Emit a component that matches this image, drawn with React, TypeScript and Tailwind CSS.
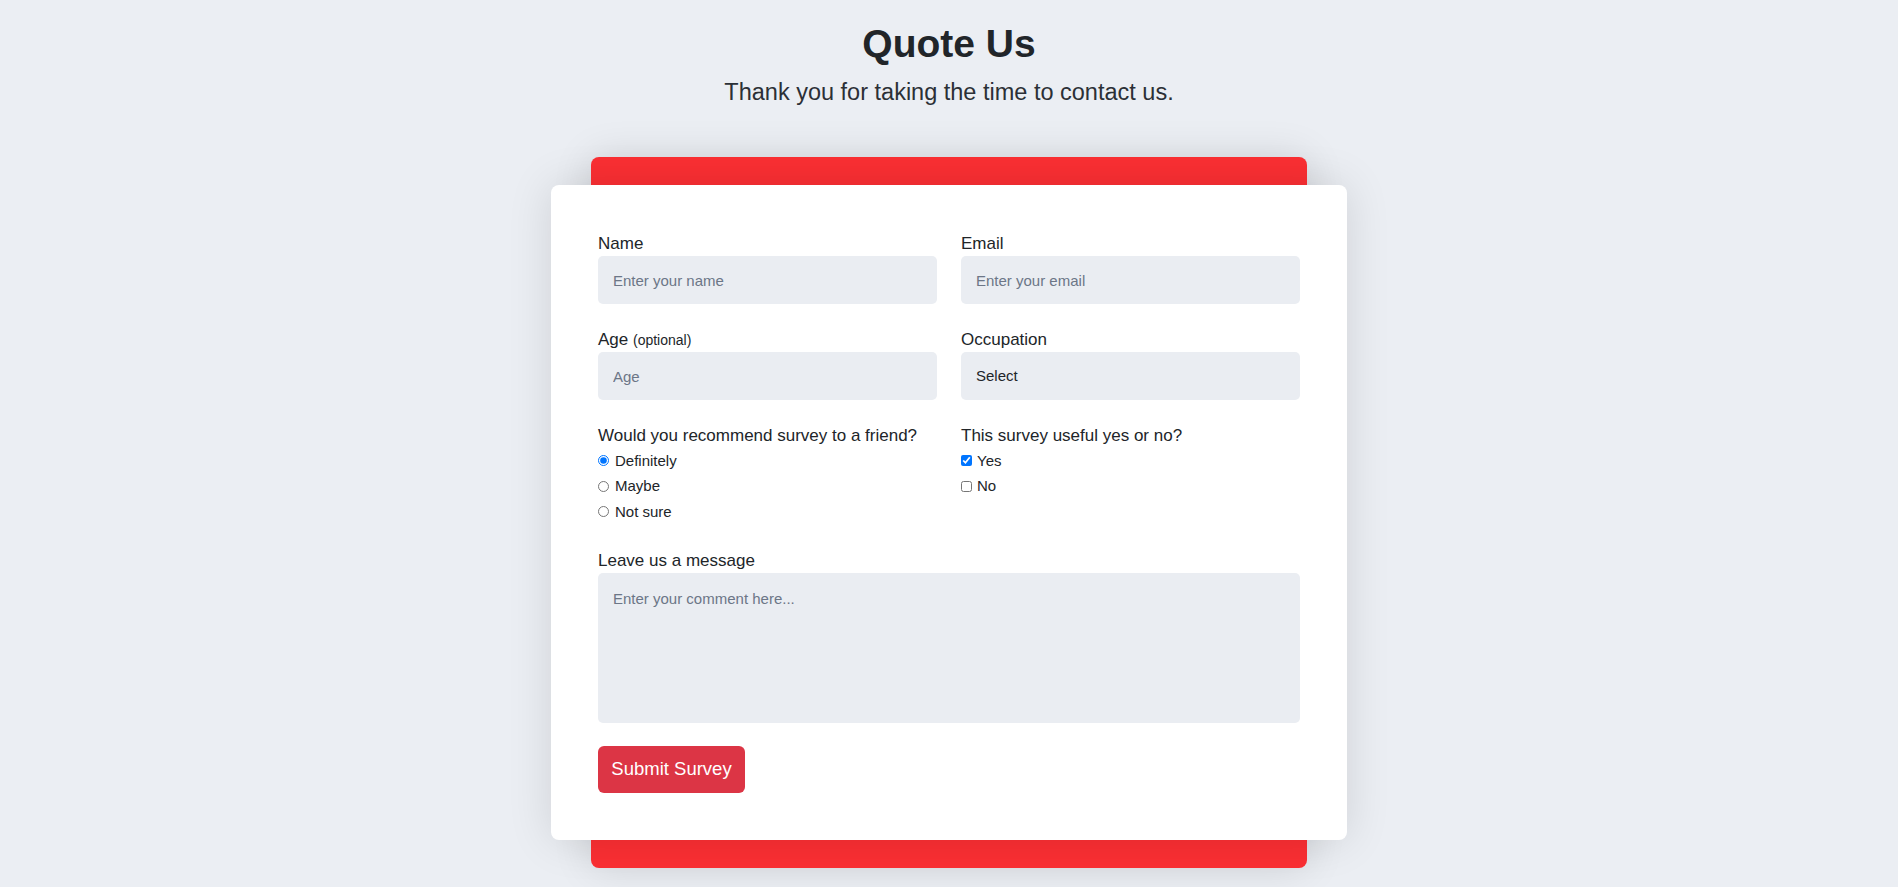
import { useState } from "react";

const inputCls =
  "w-full h-[48px] rounded-[5px] bg-[#eaedf2] px-[15px] text-[15px] text-[#212529] placeholder:text-[#6c7687] outline-none border-0";

export default function App() {
  const [recommend, setRecommend] = useState("definitely");
  const [useful, setUseful] = useState({ yes: true, no: false });

  return (
    <div
      className="min-h-screen bg-[#ebeef3] flex flex-col items-center text-[#212529]"
      style={{ fontFamily: '"Liberation Sans", Arial, sans-serif' }}
    >
      {/* Header */}
      <h1 className="pt-5 text-[39px] leading-[48px] font-bold text-[#212529]">Quote Us</h1>
      <p className="mt-2 text-[23.5px] leading-[32px] text-[#2b3036]">
        Thank you for taking the time to contact us.
      </p>

      {/* Card with red backing */}
      <div className="relative mt-[77px] w-[796px]">
        <div className="absolute -top-7 -bottom-7 left-10 right-10 rounded-lg bg-[#fb2f33] shadow-[0_0_40px_rgba(0,0,0,0.12)]" />
        <form
          className="relative rounded-lg bg-white px-[47px] pt-[47px] pb-[47px] shadow-[0_0_45px_rgba(0,0,0,0.12)]"
          onSubmit={(e) => e.preventDefault()}
        >
          <div className="grid grid-cols-2 gap-x-6 gap-y-6">
            <div>
              <label className="block text-[17px] leading-6">Name</label>
              <input className={inputCls} placeholder="Enter your name" />
            </div>
            <div>
              <label className="block text-[17px] leading-6">Email</label>
              <input className={inputCls} placeholder="Enter your email" />
            </div>

            <div>
              <label className="block text-[17px] leading-6">
                Age <span className="text-[14px]">(optional)</span>
              </label>
              <input className={inputCls} placeholder="Age" />
            </div>
            <div>
              <label className="block text-[17px] leading-6">Occupation</label>
              <select className={inputCls + " appearance-none text-[#343a40]"} defaultValue="">
                <option value="">Select</option>
                <option value="student">Student</option>
                <option value="employed">Employed</option>
                <option value="other">Other</option>
              </select>
            </div>

            <div>
              <label className="block text-[17px] leading-6">Would you recommend survey to a friend?</label>
              {[
                ["definitely", "Definitely"],
                ["maybe", "Maybe"],
                ["notsure", "Not sure"],
              ].map(([val, text]) => (
                <label key={val} className="flex items-center gap-[6px] h-[25.5px] text-[15px]">
                  <input
                    type="radio"
                    name="recommend"
                    className="m-0 w-[11px] h-[11px]"
                    checked={recommend === val}
                    onChange={() => setRecommend(val)}
                  />
                  {text}
                </label>
              ))}
            </div>
            <div>
              <label className="block text-[17px] leading-6">This survey useful yes or no?</label>
              <label className="flex items-center gap-[5px] h-[25.5px] text-[15px]">
                <input
                  type="checkbox"
                  className="m-0 w-[11px] h-[11px]"
                  checked={useful.yes}
                  onChange={() => setUseful({ ...useful, yes: !useful.yes })}
                />
                Yes
              </label>
              <label className="flex items-center gap-[5px] h-[25.5px] text-[15px]">
                <input
                  type="checkbox"
                  className="m-0 w-[11px] h-[11px]"
                  checked={useful.no}
                  onChange={() => setUseful({ ...useful, no: !useful.no })}
                />
                No
              </label>
            </div>

            <div className="col-span-2">
              <label className="block text-[17px] leading-6">Leave us a message</label>
              <textarea
                className="block w-full h-[150px] resize-none rounded-[5px] bg-[#eaedf2] px-[15px] pt-4 text-[15px] leading-5 text-[#212529] placeholder:text-[#6c7687] outline-none border-0"
                placeholder="Enter your comment here..."
              />
            </div>
          </div>

          <button
            type="submit"
            className="mt-[23px] h-[47px] w-[147px] rounded-md bg-[#dc3545] text-[18.5px] text-white"
          >
            Submit Survey
          </button>
        </form>
      </div>
    </div>
  );
}
